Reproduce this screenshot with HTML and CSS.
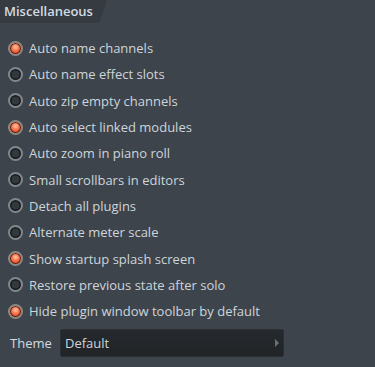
FILE: index.html
```html
<!DOCTYPE html>
<html lang="en">
<head>
  <meta charset="UTF-8">
  <title>Miscellaneous</title>
  <link rel="stylesheet" href="styles.css">
</head>
<body>
<div class="panel">
  <div class="tab-bar">
    <div class="tab">Miscellaneous</div>
  </div>

  <ul class="options">
    <li class="option"><span class="radio on"></span>Auto name channels</li>
    <li class="option"><span class="radio"></span>Auto name effect slots</li>
    <li class="option"><span class="radio"></span>Auto zip empty channels</li>
    <li class="option"><span class="radio on"></span>Auto select linked modules</li>
    <li class="option"><span class="radio"></span>Auto zoom in piano roll</li>
    <li class="option"><span class="radio"></span>Small scrollbars in editors</li>
    <li class="option"><span class="radio"></span>Detach all plugins</li>
    <li class="option"><span class="radio"></span>Alternate meter scale</li>
    <li class="option"><span class="radio on"></span>Show startup splash screen</li>
    <li class="option"><span class="radio"></span>Restore previous state after solo</li>
    <li class="option"><span class="radio on"></span>Hide plugin window toolbar by default</li>
  </ul>

  <div class="theme-row">
    <span class="theme-label">Theme</span>
    <div class="select">
      <span>Default</span>
      <span class="arrow"></span>
    </div>
  </div>
</div>
</body>
</html>
```

FILE: styles.css
```css
html, body { margin: 0; height: 100%; }
body {
  background: #3d444b;
  font-family: "Open Sans", "Noto Sans", Arial, sans-serif;
  font-size: 13px;
  color: #cdd5dc;
}
.panel { width: 375px; height: 367px; overflow: hidden; }

.tab-bar { height: 23px; }
.tab {
  width: 108px;
  height: 23px;
  box-sizing: border-box;
  padding: 2px 0 0 4px;
  font-weight: 600;
  font-size: 13px;
  color: #d3dbe2;
  background: #353b41;
  clip-path: polygon(0 0, 107px 0, 99px 23px, 0 23px);
}

.options { list-style: none; margin: 0; padding: 12px 0 0 0; }
.option {
  height: 26.3px;
  display: flex;
  align-items: center;
  gap: 6px;
  padding-left: 8px;
}
.radio {
  width: 15px;
  height: 15px;
  box-sizing: border-box;
  border-radius: 50%;
  border: 2px solid #80878d;
  background: #33383c;
  box-shadow: inset 0 0 0 1.5px #16191b;
  flex: none;
}
.radio.on {
  border-color: #8d8884;
  background: radial-gradient(circle at 50% 38%, #ffb596 0 10%, #f46a42 45%, #cf3c1c 85%);
  box-shadow: inset 0 0 0 1px #5a2012;
}

.theme-row {
  display: flex;
  align-items: center;
  margin-top: 5px;
  padding-left: 10px;
  gap: 8px;
}
.theme-label { width: 42px; color: #d3dbe2; }
.select {
  width: 224px;
  height: 28px;
  box-sizing: border-box;
  border: 1px solid #2a2f33;
  border-radius: 2px;
  background: linear-gradient(#262a2e, #202427);
  display: flex;
  align-items: center;
  justify-content: space-between;
  padding: 0 4px;
}
.arrow {
  width: 0; height: 0;
  border-top: 4px solid transparent;
  border-bottom: 4px solid transparent;
  border-left: 4px solid #6b7278;
}
```
